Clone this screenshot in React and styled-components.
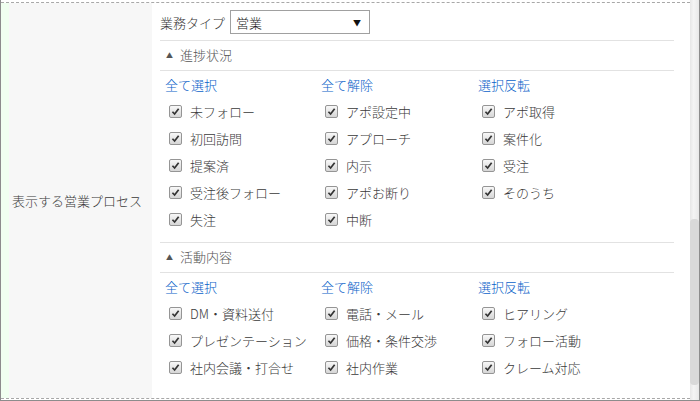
import React from 'react';
import styled, { createGlobalStyle } from 'styled-components';

const GlobalStyle = createGlobalStyle`
    html, body {
        margin: 0;
        padding: 0;
        background: #fff;
    }
    body {
        font-family: "Noto Sans CJK JP", "Noto Sans", sans-serif;
        font-size: 13px;
        font-weight: 300;
        color: #3a3a3a;
    }
`;

const progress = [
    ['未フォロー', '初回訪問', '提案済', '受注後フォロー', '失注'],
    ['アポ設定中', 'アプローチ', '内示', 'アポお断り', '中断'],
    ['アポ取得', '案件化', '受注', 'そのうち'],
];

const activity = [
    ['DM・資料送付', 'プレゼンテーション', '社内会議・打合せ'],
    ['電話・メール', '価格・条件交渉', '社内作業'],
    ['ヒアリング', 'フォロー活動', 'クレーム対応'],
];

const links = ['全て選択', '全て解除', '選択反転'];

function CheckMark() {
    return (
        <svg width="9" height="9" viewBox="0 0 10 10">
            <path d="M1.6 5.3 L4 7.8 L8.5 2" fill="none" stroke="#333" strokeWidth="1.9" />
        </svg>
    );
}

function Section({ title, columns }) {
    return (
        <SectionBox>
            <SectionHeader>
                <Caret>▲</Caret>
                {title}
            </SectionHeader>
            <Grid>
                {columns.map((items, i) => (
                    <Column key={i}>
                        <Link>{links[i]}</Link>
                        {items.map(item => (
                            <CheckRow key={item}>
                                <Box><CheckMark /></Box>
                                {item}
                            </CheckRow>
                        ))}
                    </Column>
                ))}
            </Grid>
        </SectionBox>
    );
}

function App() {
    return (
        <>
            <GlobalStyle />
            <Frame>
                <Main>
                    <Row>
                        <LabelCell>表示する営業プロセス</LabelCell>
                        <Content>
                            <TypeRow>
                                業務タイプ
                                <Select>
                                    営業
                                    <Arrow>▼</Arrow>
                                </Select>
                            </TypeRow>
                            <Section title="進捗状況" columns={progress} />
                            <Section title="活動内容" columns={activity} />
                        </Content>
                    </Row>
                </Main>
                <Scrollbar>
                    <Thumb />
                </Scrollbar>
            </Frame>
        </>
    );
}

const Frame = styled.div`
    width: 700px;
    height: 401px;
    box-sizing: border-box;
    border: 1px solid #8c8c8c;
    border-top: none;
    display: flex;
`;

const Main = styled.div`
    flex: 1;
    display: flex;
    padding: 2px 0 1px;
`;

const Row = styled.div`
    flex: 1;
    display: flex;
    border-top: 1px dashed #a8a8a8;
    border-bottom: 1px dashed #a8a8a8;
`;

const LabelCell = styled.div`
    width: 140px;
    padding-left: 3px;
    border-left: 8px solid #f0fff0;
    background: #f7f7f7;
    display: flex;
    align-items: center;
`;

const Content = styled.div`
    flex: 1;
    padding: 7px 16px 0 8px;
`;

const TypeRow = styled.div`
    display: flex;
    align-items: center;
    gap: 5px;
    height: 24px;
    padding-bottom: 6px;
    border-bottom: 1px solid #e2e2e2;
`;

const Select = styled.div`
    width: 140px;
    height: 24px;
    box-sizing: border-box;
    border: 1px solid #a0a0a0;
    display: flex;
    align-items: center;
    justify-content: space-between;
    padding: 0 8px 0 5px;
    color: #222;
`;

const Arrow = styled.span`
    font-size: 8px;
    color: #111;
`;

const SectionBox = styled.div`
    padding-bottom: 9px;
    border-bottom: 1px solid #e2e2e2;
    &:last-child {
        border-bottom: none;
    }
`;

const SectionHeader = styled.div`
    height: 30px;
    display: flex;
    align-items: center;
    padding-left: 6px;
    padding-bottom: 2px;
    box-sizing: border-box;
    color: #555;
    border-bottom: 1px solid #e2e2e2;
`;

const Caret = styled.span`
    font-size: 7px;
    margin-right: 7px;
    color: #555;
`;

const Grid = styled.div`
    display: grid;
    grid-template-columns: 156px 157px 157px;
    padding-left: 5px;
`;

const Column = styled.div`
    display: flex;
    flex-direction: column;
`;

const Link = styled.span`
    color: #0a62c9;
    line-height: 18px;
    padding: 5px 0 4px;
`;

const CheckRow = styled.div`
    height: 27px;
    display: flex;
    align-items: center;
    padding-left: 4px;
    padding-bottom: 1px;
    box-sizing: border-box;
`;

const Box = styled.span`
    width: 13px;
    height: 13px;
    box-sizing: border-box;
    border: 1px solid #959595;
    border-radius: 2px;
    background: linear-gradient(#f8f8f8, #d6d6d6);
    display: flex;
    align-items: center;
    justify-content: center;
    margin-right: 8px;
`;

const Scrollbar = styled.div`
    width: 9px;
    background: linear-gradient(to right, #e6e6e6, #f4f4f4 40%, #e8e8e8);
    display: flex;
    flex-direction: column;
    padding-top: 219px;
`;

const Thumb = styled.div`
    height: 166px;
    background: #d9d9d9;
    border-radius: 4px;
`;

export default App;
